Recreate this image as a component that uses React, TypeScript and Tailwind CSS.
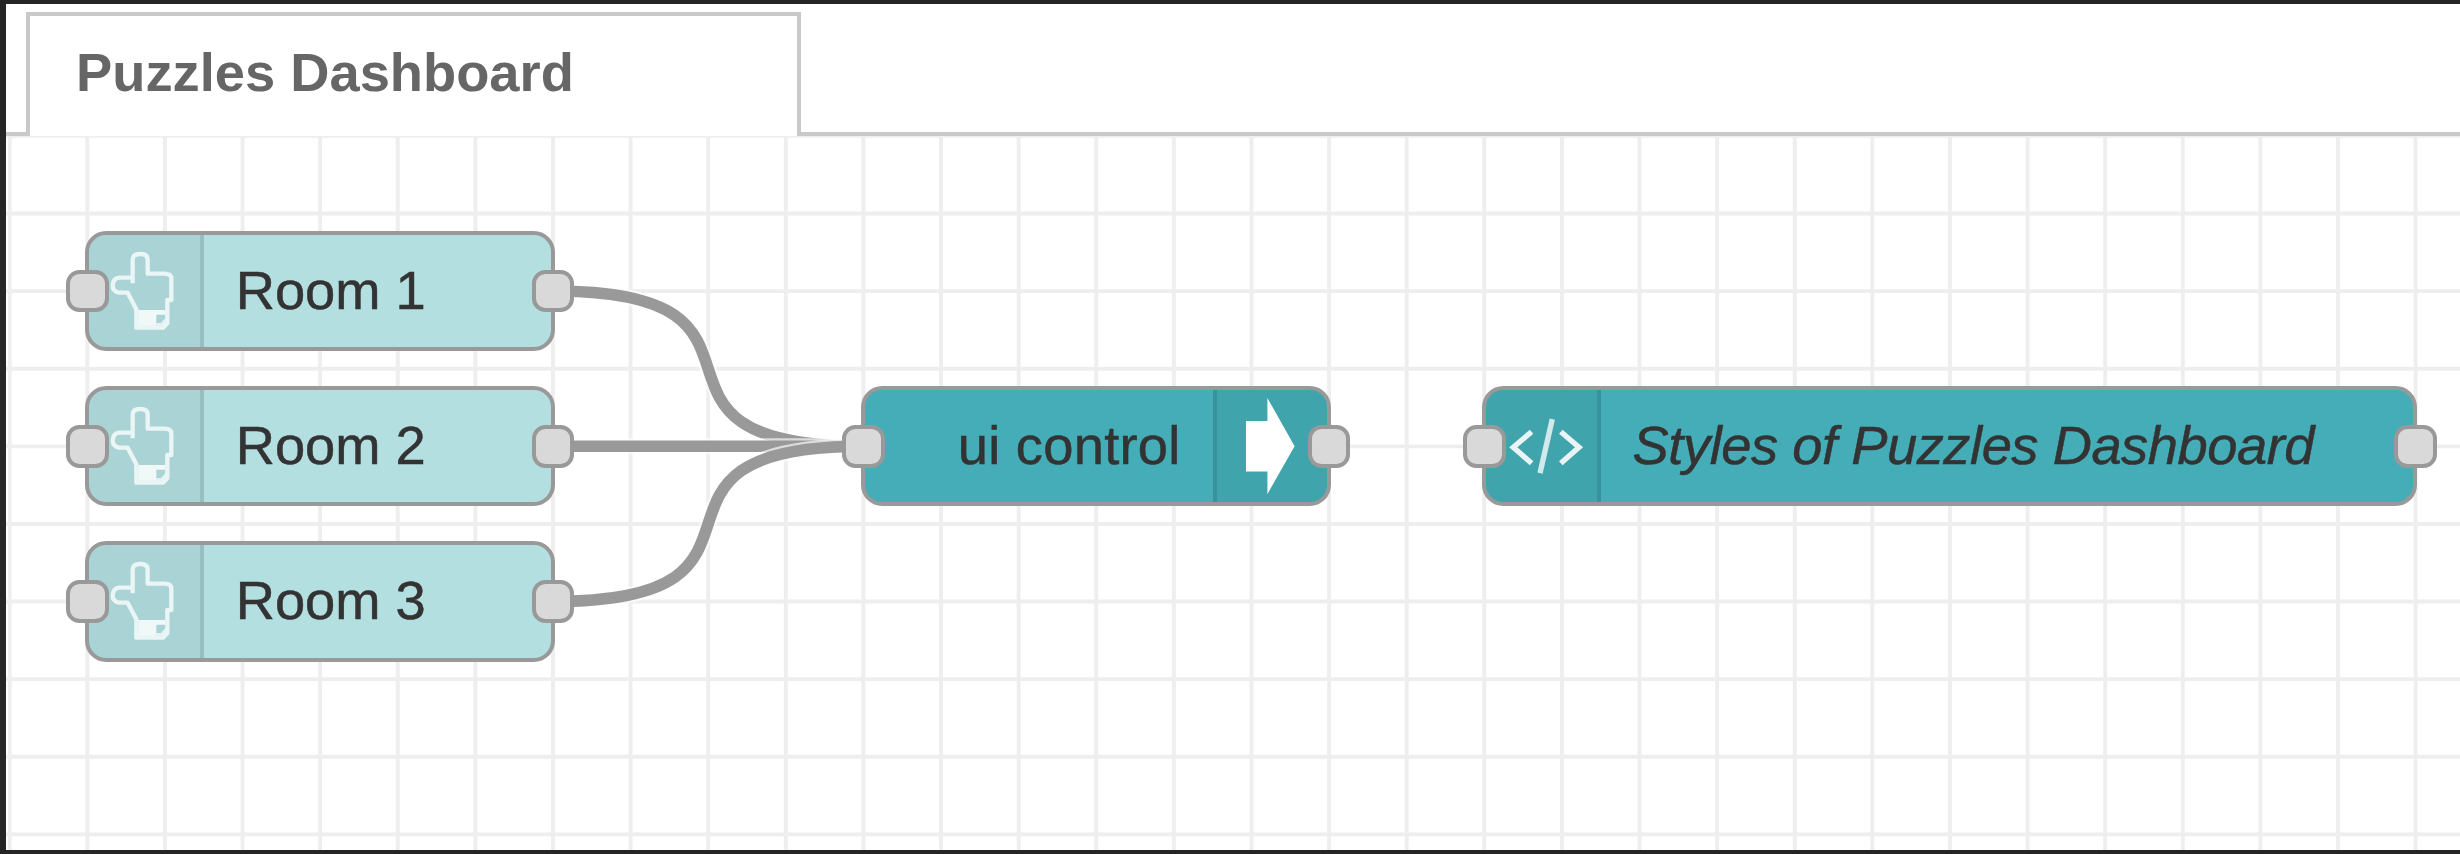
const CELL = 77.61;

const columns = Array.from({ length: 32 }, (_, i) => 9.7 + i * CELL);
const rows = Array.from({ length: 10 }, (_, i) => 135.9 + i * CELL);

const wires = [
  "M553 291 C813.3 291 603 446.3 863.3 446.3",
  "M553 446.3 H863.3",
  "M553 601.5 C813.3 601.5 603 446.3 863.3 446.3",
];

function GridAndWires() {
  return (
    <svg className="block" width="2454" height="714" viewBox="6 136 2454 714" fill="none">
      <g stroke="#eeeeee" strokeWidth="3.88">
        {columns.map((x) => (
          <line key={x} x1={x} x2={x} y1="136" y2="854" />
        ))}
        {rows.map((y) => (
          <line key={y} x1="6" x2="2460" y1={y} y2={y} />
        ))}
      </g>
      {wires.map((d) => (
        <g key={d}>
          <path d={d} stroke="#ffffff" strokeWidth="16" strokeOpacity="0.65" />
          <path d={d} stroke="#999999" strokeWidth="11.64" />
        </g>
      ))}
    </svg>
  );
}

function HandIcon() {
  return (
    <svg className="ml-[17.3px]" width="70" height="92" viewBox="140 75 210 276" fill="none">
      <g stroke="#ffffff" strokeOpacity="0.76" strokeWidth="13" strokeLinejoin="round">
        <path d="M217 190 V118 Q218 102 240 102 Q262 102 262 118 V161 H312 Q333 161 333 176 V240 H321 V310 L308 323 H228 V268 L202 218 H175 Q157 214 157 196 Q158 176 176 173 H211" />
      </g>
      <path d="M234 270 H315 V284 H288 V317 H234 Z" fill="#ffffff" fillOpacity="0.84" />
      <path d="M288 317 V309 H302 L315 294 V308 L306 317 Z" fill="#ffffff" fillOpacity="0.7" />
    </svg>
  );
}

function CodeIcon() {
  return (
    <svg
      className="ml-[17.9px]"
      width="80"
      height="90"
      viewBox="1504.2 401.3 80 90"
      fill="none"
      stroke="#ffffff"
      strokeWidth="5.4"
      strokeOpacity="0.88"
    >
      <path d="M1531.8 432 L1513.5 447.5 L1531.8 463.6" />
      <path d="M1561 432 L1579.2 447.5 L1561 463.6" />
      <path d="M1552.5 419.5 L1540.2 473.5" strokeOpacity="0.76" />
    </svg>
  );
}

function ArrowIcon() {
  return (
    <svg className="ml-[29px]" width="49" height="98" viewBox="0 0 49 98">
      <path d="M0 24 H21.4 V1 L48.6 49.2 L21.4 97.2 V74.4 H0 Z" fill="#ffffff" />
    </svg>
  );
}

function Port({ side }: { side: "left" | "right" }) {
  return (
    <span
      className={
        "absolute top-[38.9px] size-[42.6px] rounded-[13.5px] border-4 border-[#999999] bg-[#d9d9d9] " +
        (side === "left" ? "left-[-19.4px]" : "right-[-19.4px]")
      }
    />
  );
}

type NodeProps = {
  place: string;
  fill: string;
  label: string;
  labelStyle?: string;
  icon: "hand" | "arrow" | "code";
};

function FlowNode({ place, fill, label, labelStyle = "", icon }: NodeProps) {
  const atEnd = icon === "arrow";
  return (
    <div className={"absolute h-[120.3px] " + place}>
      <div
        className={
          "flex h-full overflow-hidden rounded-[21.3px] border-4 border-[#999999] " +
          (atEnd ? "flex-row-reverse " : "") +
          fill
        }
      >
        <div
          className={
            "flex w-[114.3px] shrink-0 items-center border-[#00000019] bg-[#0000000d] " +
            (atEnd ? "border-l-4" : "border-r-4")
          }
        >
          {icon === "hand" && <HandIcon />}
          {icon === "arrow" && <ArrowIcon />}
          {icon === "code" && <CodeIcon />}
        </div>
        <span
          className={
            "self-center px-8 text-[54.3px] leading-[62px] whitespace-nowrap text-[#333333] [-webkit-text-stroke:0.5px_#333333] " +
            labelStyle
          }
        >
          {label}
        </span>
      </div>
      <Port side="left" />
      <Port side="right" />
    </div>
  );
}

export default function App() {
  return (
    <div className="flex h-[854px] w-[2460px] flex-col overflow-hidden bg-[#252525] py-1 pl-1.5 font-['Liberation_Sans',Arial,sans-serif]">
      <header className="flex h-[132px] shrink-0 bg-white">
        <div className="w-5 border-b-4 border-[#c9c9c9]" />
        <div className="mt-2 w-[775px] border-x-4 border-t-4 border-[#c9c9c9] pt-[26px] pl-[46px] text-[54.3px] leading-[62px] font-bold text-[#666666]">
          Puzzles Dashboard
        </div>
        <div className="grow border-b-4 border-[#c9c9c9]" />
      </header>
      <main className="relative grow overflow-hidden bg-white">
        <GridAndWires />
        <FlowNode place="left-[79.4px] top-[94.9px] w-[469.5px]" fill="bg-[#b3dfe1]" label="Room 1" icon="hand" />
        <FlowNode place="left-[79.4px] top-[250.1px] w-[469.5px]" fill="bg-[#b3dfe1]" label="Room 2" icon="hand" />
        <FlowNode place="left-[79.4px] top-[405.3px] w-[469.5px]" fill="bg-[#b3dfe1]" label="Room 3" icon="hand" />
        <FlowNode
          place="left-[855.4px] top-[250.1px] w-[469.5px]"
          fill="bg-[#44adb7]"
          label="ui control"
          labelStyle="tracking-[0.25px]"
          icon="arrow"
        />
        <FlowNode
          place="left-[1476.3px] top-[250.1px] w-[935.2px]"
          fill="bg-[#44adb7]"
          label="Styles of Puzzles Dashboard"
          labelStyle="italic tracking-[-0.47px]"
          icon="code"
        />
      </main>
    </div>
  );
}
